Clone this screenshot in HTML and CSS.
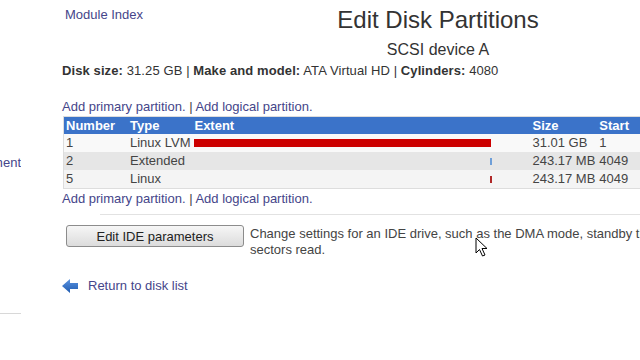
FILE: index.html
```html
<!DOCTYPE html>
<html lang="en">
<head>
  <meta charset="UTF-8">
  <title>Edit Disk Partitions</title>
  <link rel="stylesheet" href="styles.css">
</head>
<body>
  <div class="side">
    <div class="side-item"><span>Disk Management</span></div>
    <div class="side-rule"></div>
  </div>
  <div class="main">
    <div class="head">
      <div class="head-left"><a href="#" class="link">Module Index</a></div>
      <div class="head-title">
        <h1>Edit Disk Partitions</h1>
        <div class="subtitle">SCSI device A</div>
      </div>
    </div>
    <div class="disk-info">
      <b>Disk size:</b> 31.25 GB | <b>Make and model:</b> ATA Virtual HD | <b>Cylinders:</b> 4080
    </div>

    <div class="add-links"><a href="#">Add primary partition.</a> | <a href="#">Add logical partition.</a></div>
    <table class="parts">
      <tr class="hdr">
        <th class="c-num">Number</th>
        <th class="c-type">Type</th>
        <th class="c-ext">Extent</th>
        <th class="c-size">Size</th>
        <th class="c-start">Start</th>
      </tr>
      <tr class="r1">
        <td>1</td><td>Linux LVM</td>
        <td><div class="extent"><div class="bar red" style="width:297px"></div></div></td>
        <td>31.01 GB</td><td>1</td>
      </tr>
      <tr class="r2">
        <td>2</td><td>Extended</td>
        <td><div class="extent"><div class="tick blue" style="margin-left:296px"></div></div></td>
        <td>243.17 MB</td><td>4049</td>
      </tr>
      <tr class="r3">
        <td>5</td><td>Linux</td>
        <td><div class="extent"><div class="tick dark" style="margin-left:296px"></div></div></td>
        <td>243.17 MB</td><td>4049</td>
      </tr>
    </table>
    <div class="add-links"><a href="#">Add primary partition.</a> | <a href="#">Add logical partition.</a></div>

    <div class="rule"></div>

    <div class="ide-row">
      <button class="ide-btn" type="button">Edit IDE parameters</button>
      <div class="ide-desc">Change settings for an IDE drive, such as the DMA mode, standby timeout and number of sectors read.</div>
    </div>

    <div class="back">
      <svg class="back-icon" width="17" height="16" viewBox="0 0 17 16">
        <defs>
          <linearGradient id="ag" x1="0" y1="0" x2="0" y2="1">
            <stop offset="0" stop-color="#5b93e0"/>
            <stop offset="1" stop-color="#1f5bb0"/>
          </linearGradient>
        </defs>
        <polygon points="0,8 8,1 8,5 16,5 16,11 8,11 8,15" fill="url(#ag)"/>
      </svg>
      <a href="#" class="link">Return to disk list</a>
    </div>
  </div>

  <svg class="cursor" width="14" height="20" viewBox="0 0 14 20">
    <polygon points="1,1 1,16 4.5,12.5 7.5,19 10,18 7,11.5 12,11.5" fill="#fff" stroke="#000" stroke-width="1"/>
  </svg>
</body>
</html>
```

FILE: styles.css
```css
body {
  margin: 0;
  padding: 0;
  background: #fff;
  font-family: "Liberation Sans", Arial, sans-serif;
  font-size: 13px;
  color: #444;
  display: flex;
  width: 640px;
  height: 360px;
  overflow: hidden;
  position: relative;
}
a {
  color: #45458a;
  text-decoration: none;
}
.side {
  width: 21px;
  flex: none;
  overflow: hidden;
  padding-top: 155px;
}
.side-item {
  display: flex;
  justify-content: flex-end;
  white-space: nowrap;
  color: #45458a;
  line-height: 16px;
}
.side-rule {
  margin-top: 142px;
  border-top: 1px solid #d8d8d8;
}
.main {
  margin-left: 41px;
  flex: none;
  width: 760px;
}
.head {
  display: flex;
  padding-top: 7px;
}
.head-left {
  width: 223px;
  padding-left: 3px;
  line-height: 16px;
}
.head-title {
  width: 300px;
  text-align: center;
  color: #333;
}
.head-title h1 {
  margin: 0;
  font-size: 24px;
  font-weight: normal;
  line-height: 26px;
}
.subtitle {
  font-size: 16px;
  margin-top: 8px;
  line-height: 18px;
}
.disk-info {
  margin-top: 4px;
  line-height: 16px;
  color: #333;
  letter-spacing: 0.1px;
}
.add-links {
  line-height: 16px;
  color: #444;
}
.disk-info + .add-links {
  margin-top: 20px;
}
.parts {
  border-collapse: collapse;
  margin: 1px 0 2px 1px;
  width: 700px;
  border: 1px solid #ddd;
}
.parts th {
  background: #3b73c9;
  color: #fff;
  text-align: left;
  font-weight: bold;
  height: 17px;
  padding: 0 2px;
  line-height: 17px;
}
.parts td {
  height: 18px;
  padding: 0 2px;
  line-height: 18px;
  color: #444;
  white-space: nowrap;
}
.c-num { width: 60px; }
.c-type { width: 60px; }
.c-ext { width: 334px; }
.c-size { width: 62px; }
.r1 td { background: #f9f9f9; }
.r2 td { background: #e6e6e6; }
.r3 td { background: #f4f4f4; }
.extent {
  display: flex;
  align-items: center;
  height: 18px;
}
.bar {
  height: 8px;
}
.red { background: #cc0000; }
.tick {
  width: 2px;
  height: 7px;
}
.blue { background: #6f9fd8; }
.dark { background: #b02828; }
.rule {
  margin: 7px 0 0 38px;
  border-top: 1px solid #e2e2e2;
}
.ide-row {
  display: flex;
  align-items: flex-start;
  margin-top: 10px;
}
.ide-btn {
  margin-left: 4px;
  width: 178px;
  height: 22px;
  font-family: "Liberation Sans", Arial, sans-serif;
  font-size: 13px;
  color: #222;
  background: linear-gradient(#f6f6f6, #dcdcdc);
  border: 1px solid #8c8c8c;
  border-radius: 3px;
  padding: 0;
  flex: none;
}
.ide-desc {
  margin-left: 6px;
  width: 520px;
  flex: none;
  line-height: 16px;
  margin-top: 1px;
}
.back {
  display: flex;
  align-items: center;
  margin-top: 20px;
  line-height: 16px;
}
.back-icon {
  margin-right: 9px;
  margin-left: 0;
}
.cursor {
  position: absolute;
  left: 475px;
  top: 237px;
}
```
